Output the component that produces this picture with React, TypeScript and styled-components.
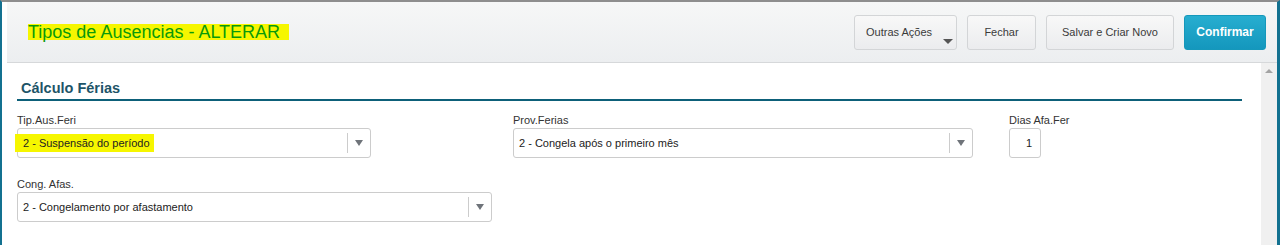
import React from "react";
import styled, { createGlobalStyle } from "styled-components";

const GlobalStyle = createGlobalStyle`
  html, body {
    margin: 0;
    padding: 0;
    background: #ffffff;
  }
  body {
    font-family: "Liberation Sans", Arial, sans-serif;
  }
`;

const Frame = styled.div`
  width: 1280px;
  height: 245px;
  box-sizing: border-box;
  border-left: 2px solid #137190;
  border-right: 3px solid #137190;
  border-top: 2px solid #8e8e8e;
  padding-left: 5px;
  display: flex;
  flex-direction: column;
  overflow: hidden;
  background: #ffffff;
`;

const Header = styled.div`
  height: 60px;
  flex-shrink: 0;
  display: flex;
  align-items: center;
  justify-content: space-between;
  padding: 0 11px 0 21px;
  background: linear-gradient(#f6f7f7, #eceef0);
  border-bottom: 1px solid #d6d8da;
`;

const Title = styled.span`
  font-size: 18px;
  line-height: 16px;
  color: #0a9a0a;
  background: #f6f600;
  padding-right: 9px;
  margin-top: -1px;
`;

const Actions = styled.div`
  display: flex;
  gap: 10px;
`;

const Button = styled.button<{ $width: number; $primary?: boolean }>`
  position: relative;
  width: ${({ $width }) => $width}px;
  height: 35px;
  box-sizing: border-box;
  border-radius: 3px;
  font-family: "Liberation Sans", Arial, sans-serif;
  font-size: ${({ $primary }) => ($primary ? "12px" : "11px")};
  font-weight: ${({ $primary }) => ($primary ? 700 : 400)};
  color: ${({ $primary }) => ($primary ? "#ffffff" : "#3a3a3a")};
  border: 1px solid ${({ $primary }) => ($primary ? "#1598bb" : "#d3d5d7")};
  background: ${({ $primary }) =>
    $primary
      ? "linear-gradient(#27aed0, #1497bd)"
      : "linear-gradient(#f8f8f8, #ebecee)"};
  padding: 0;
  cursor: pointer;
`;

const MenuButtonLabel = styled.span`
  display: block;
  text-align: left;
  padding-left: 11px;
`;

const Caret = styled.span`
  position: absolute;
  right: 3px;
  bottom: 5px;
  width: 0;
  height: 0;
  border-left: 5px solid transparent;
  border-right: 5px solid transparent;
  border-top: 5px solid #555555;
`;

const Body = styled.div`
  flex: 1;
  display: flex;
  min-height: 0;
`;

const Content = styled.div`
  flex: 1;
  padding: 17px 19px 0 10px;
`;

const Scrollbar = styled.div`
  width: 16px;
  background: #f0f0f0;
  display: flex;
  justify-content: center;
  padding-top: 6px;
  box-sizing: border-box;
`;

const ScrollArrow = styled.span`
  width: 0;
  height: 0;
  border-left: 4px solid transparent;
  border-right: 4px solid transparent;
  border-bottom: 4px solid #a3a3a3;
`;

const SectionTitle = styled.div`
  font-size: 14.5px;
  font-weight: 700;
  color: #1d5468;
  padding: 0 0 2px 4px;
  border-bottom: 2px solid #0d6079;
  line-height: 17px;
`;

const Row = styled.div<{ $top: number }>`
  display: grid;
  grid-template-columns: 496px 496px auto;
  margin-top: ${({ $top }) => $top}px;
`;

const FieldBox = styled.div`
  display: flex;
  flex-direction: column;
`;

const Label = styled.label`
  font-size: 11px;
  line-height: 13px;
  color: #333333;
  margin-bottom: 1px;
`;

const Select = styled.div<{ $width: number }>`
  width: ${({ $width }) => $width}px;
  height: 30px;
  box-sizing: border-box;
  border: 1px solid #cccccc;
  border-radius: 3px;
  display: flex;
  align-items: center;
  background: #ffffff;
`;

const SelectValue = styled.div`
  flex: 1;
  font-size: 11px;
  color: #222222;
  padding-left: 5px;
`;

const Highlight = styled.span`
  background: #f6f600;
  padding: 3px 4px 3px 8px;
  margin-left: -8px;
`;

const SelectArrow = styled.div`
  width: 22px;
  height: 20px;
  border-left: 1px solid #cccccc;
  display: flex;
  align-items: center;
  justify-content: center;
  &::after {
    content: "";
    border-left: 4px solid transparent;
    border-right: 4px solid transparent;
    border-top: 6px solid #6f747a;
  }
`;

const NumberInput = styled.div`
  width: 32px;
  height: 30px;
  box-sizing: border-box;
  border: 1px solid #cccccc;
  border-radius: 3px;
  display: flex;
  align-items: center;
  justify-content: flex-end;
  padding-right: 8px;
  font-size: 11px;
  color: #222222;
`;

const App: React.FC = () => {
  return (
    <>
      <GlobalStyle />
      <Frame>
        <Header>
          <Title>Tipos de Ausencias - ALTERAR</Title>
          <Actions>
            <Button $width={103}>
              <MenuButtonLabel>Outras Ações</MenuButtonLabel>
              <Caret />
            </Button>
            <Button $width={69}>Fechar</Button>
            <Button $width={128}>Salvar e Criar Novo</Button>
            <Button $width={82} $primary>
              Confirmar
            </Button>
          </Actions>
        </Header>
        <Body>
          <Content>
            <SectionTitle>Cálculo Férias</SectionTitle>
            <Row $top={13}>
              <FieldBox>
                <Label>Tip.Aus.Feri</Label>
                <Select $width={354}>
                  <SelectValue>
                    <Highlight>2 - Suspensão do período</Highlight>
                  </SelectValue>
                  <SelectArrow />
                </Select>
              </FieldBox>
              <FieldBox>
                <Label>Prov.Ferias</Label>
                <Select $width={460}>
                  <SelectValue>2 - Congela após o primeiro mês</SelectValue>
                  <SelectArrow />
                </Select>
              </FieldBox>
              <FieldBox>
                <Label>Dias Afa.Fer</Label>
                <NumberInput>1</NumberInput>
              </FieldBox>
            </Row>
            <Row $top={20}>
              <FieldBox>
                <Label>Cong. Afas.</Label>
                <Select $width={475}>
                  <SelectValue>2 - Congelamento por afastamento</SelectValue>
                  <SelectArrow />
                </Select>
              </FieldBox>
            </Row>
          </Content>
          <Scrollbar>
            <ScrollArrow />
          </Scrollbar>
        </Body>
      </Frame>
    </>
  );
};

export default App;
